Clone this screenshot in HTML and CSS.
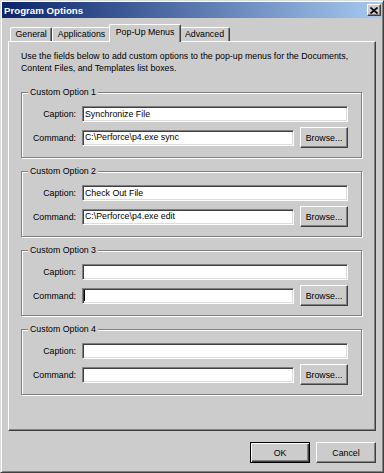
FILE: index.html
```html
<!DOCTYPE html>
<html lang="en">
<head>
  <meta charset="UTF-8">
  <title>Program Options</title>
  <link rel="stylesheet" href="styles.css">
</head>
<body>
  <div class="window">
    <div class="titlebar">
      <span class="title">Program Options</span>
      <div class="close">
        <svg width="8" height="7" viewBox="0 0 8 7"><path d="M0.5 0.5 L7.5 6.5 M7.5 0.5 L0.5 6.5" stroke="#000" stroke-width="1.6"/></svg>
      </div>
    </div>

    <div class="tabs">
      <div class="tab">General</div>
      <div class="tab">Applications</div>
      <div class="tab active">Pop-Up Menus</div>
      <div class="tab">Advanced</div>
    </div>

    <div class="panel">
      <p class="intro">Use the fields below to add custom options to the pop-up menus for the Documents,<br>Content Files, and Templates list boxes.</p>

      <fieldset class="group">
        <legend>Custom Option 1</legend>
        <label>Caption:</label>
        <div class="field wide">Synchronize File</div>
        <label>Command:</label>
        <div class="field">C:\Perforce\p4.exe sync</div>
        <div class="btn">Browse...</div>
      </fieldset>

      <fieldset class="group">
        <legend>Custom Option 2</legend>
        <label>Caption:</label>
        <div class="field wide">Check Out File</div>
        <label>Command:</label>
        <div class="field">C:\Perforce\p4.exe edit</div>
        <div class="btn">Browse...</div>
      </fieldset>

      <fieldset class="group">
        <legend>Custom Option 3</legend>
        <label>Caption:</label>
        <div class="field wide"></div>
        <label>Command:</label>
        <div class="field"><span class="caret"></span></div>
        <div class="btn">Browse...</div>
      </fieldset>

      <fieldset class="group">
        <legend>Custom Option 4</legend>
        <label>Caption:</label>
        <div class="field wide"></div>
        <label>Command:</label>
        <div class="field"></div>
        <div class="btn">Browse...</div>
      </fieldset>
    </div>

    <div class="actions">
      <div class="btn action default">OK</div>
      <div class="btn action">Cancel</div>
    </div>
  </div>
</body>
</html>
```

FILE: styles.css
```css
body {
  margin: 0;
  font-family: "Liberation Sans", Arial, sans-serif;
  font-size: 8.8px;
  color: #000;
}
.window {
  box-sizing: border-box;
  width: 384px;
  height: 473px;
  padding: 1px;
  background-color: #cccccc;
  border: 1px solid;
  border-color: #dcdcdc #404040 #404040 #dcdcdc;
  box-shadow: inset 1px 1px #ffffff, inset -1px -1px #808080;
  display: flex;
  flex-direction: column;
}
.titlebar {
  height: 16px;
  display: flex;
  align-items: center;
  justify-content: space-between;
  padding: 0 1px 0 2px;
  background: linear-gradient(to right, #0a246a, #a6caf0);
}
.title {
  color: #ffffff;
  font-weight: bold;
  font-size: 9.7px;
}
.close {
  box-sizing: border-box;
  width: 14px;
  height: 12px;
  display: flex;
  align-items: center;
  justify-content: center;
  background-color: #cccccc;
  border: 1px solid;
  border-color: #ffffff #404040 #404040 #ffffff;
  box-shadow: inset -1px -1px #808080;
}
.tabs {
  display: flex;
  align-items: flex-end;
  height: 17px;
  margin-top: 6px;
  padding-left: 8px;
}
.tab {
  box-sizing: border-box;
  height: 14px;
  padding: 0 4.5px;
  line-height: 13px;
  border: 1px solid;
  border-bottom: none;
  border-color: #ffffff #404040 #ffffff #ffffff;
  border-radius: 2px 2px 0 0;
  box-shadow: inset -1px 0 #808080;
}
.tab.active {
  position: relative;
  z-index: 1;
  height: 18px;
  margin: 0 -2px -1px;
  padding: 0 6px;
  line-height: 15px;
  background-color: #cccccc;
}
.panel {
  margin: 0 6px;
  height: 390px;
  box-sizing: border-box;
  padding: 8px 13px 0 12px;
  border: 1px solid;
  border-color: #ffffff #404040 #404040 #ffffff;
  box-shadow: inset -1px -1px #808080;
  display: flex;
  flex-direction: column;
  gap: 7px;
}
.intro {
  margin: 0 0 5px;
  line-height: 12px;
}
.group {
  margin: 0;
  padding: 8px 0 9px;
  border: 1px solid #808080;
  box-shadow: 1px 1px #ffffff, inset 1px 1px #ffffff;
  display: grid;
  grid-template-columns: 54px 212px 48px;
  column-gap: 6px;
  row-gap: 5px;
  align-items: center;
}
.group legend {
  margin-left: 6px;
  padding: 0 2px;
  line-height: 12px;
  background-color: #cccccc;
}
.group label {
  text-align: right;
}
.field {
  box-sizing: border-box;
  height: 16px;
  padding-left: 2px;
  line-height: 13px;
  background-color: #ffffff;
  border: 1px solid;
  border-color: #808080 #ffffff #ffffff #808080;
  box-shadow: inset 1px 1px #404040, inset -1px -1px #dcdcdc;
  display: flex;
  align-items: center;
  white-space: nowrap;
}
.field.wide {
  grid-column: 2 / 4;
}
.caret {
  width: 1px;
  height: 11px;
  margin-left: -1px;
  background-color: #000000;
}
.btn {
  box-sizing: border-box;
  height: 21px;
  display: flex;
  align-items: center;
  justify-content: center;
  border: 1px solid;
  border-color: #ffffff #404040 #404040 #ffffff;
  box-shadow: inset -1px -1px #808080;
}
.actions {
  display: flex;
  justify-content: flex-end;
  gap: 6px;
  margin: 11px 6px 0 0;
}
.btn.action {
  width: 60px;
}
.btn.default {
  border-color: #000000;
  box-shadow: inset 1px 1px #ffffff, inset -1px -1px #404040, inset -2px -2px #808080;
}
```
